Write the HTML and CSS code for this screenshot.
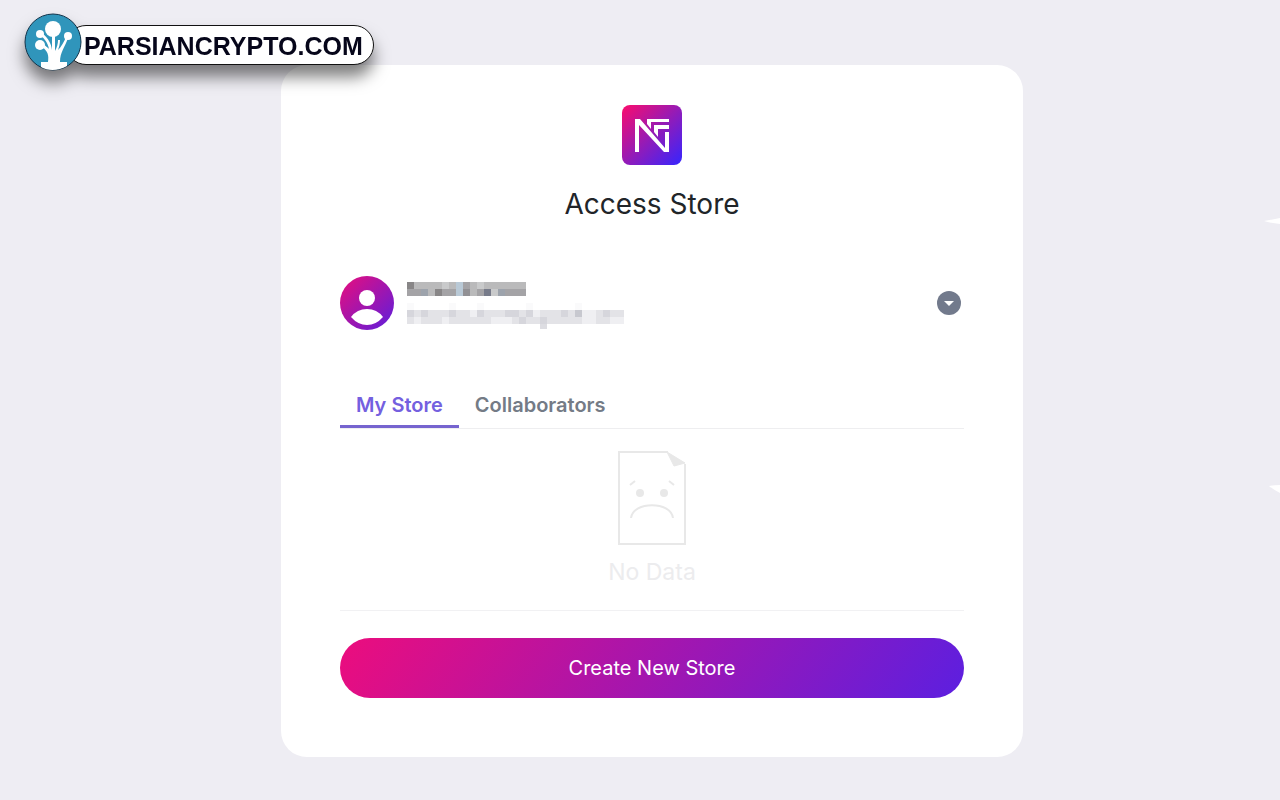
FILE: index.html
```html
<!DOCTYPE html>
<html lang="en">

<head>
    <meta charset="UTF-8">
    <meta name="viewport" content="width=device-width, initial-scale=1.0">
    <title>Access Store</title>
    <link rel="stylesheet" href="styles.css">
</head>

<body>
    <!-- site badge, floats over the page -->
    <a class="brand" href="#">
        <svg class="brand-icon" viewBox="0 0 58 58" aria-hidden="true">
            <circle cx="29" cy="29" r="28" fill="#3095bb" stroke="#12334a" stroke-width="1" />
            <g fill="#fff">
                <circle cx="29" cy="16" r="8" />
                <circle cx="16" cy="21" r="4" />
                <circle cx="16" cy="32" r="5" />
                <circle cx="44" cy="23" r="4" />
                <path d="M17 49H24C25 42 24 38 17 33L19 31C22 33 24 35 25 36C24 30 20 25 17 23L19 21C24 25 27 30 28 37L28 22H31L31 38C33 34 34 31 34 27H36C36 31 35 34 34 37C37 34 40 29 42 24L44 25C41 34 36 39 36 49H43V53C34 58 24 58 17 54Z" />
            </g>
        </svg>
        <span class="brand-name">PARSIANCRYPTO.COM</span>
    </a>

    <!-- tips of the background shape at the right edge -->
    <svg class="spark spark-top" viewBox="0 0 16 6" aria-hidden="true">
        <path d="M0 3L16 0V6Q6 5 0 3Z" fill="#fff" />
    </svg>
    <svg class="spark spark-bottom" viewBox="0 0 11 9" aria-hidden="true">
        <path d="M0 2Q5 1 11 1V9Q5 6 0 2Z" fill="#fff" />
    </svg>

    <main class="card">
        <svg class="logo" viewBox="0 0 60 60" role="img" aria-label="NF">
            <defs>
                <linearGradient id="logoFill" x1="0" y1="0" x2="1" y2="1">
                    <stop offset="0" stop-color="#fc0c6c" />
                    <stop offset="0.5" stop-color="#951bb6" />
                    <stop offset="1" stop-color="#3525ff" />
                </linearGradient>
            </defs>
            <rect width="60" height="60" rx="8" fill="url(#logoFill)" />
            <g fill="#fff">
                <path d="M13 47V14H18L43 43V27H47V47H42L17 20V47Z" />
                <path d="M25 14H47V17H29V24L25 19Z" />
                <path d="M32 20H47V24H36V32L32 27Z" />
            </g>
        </svg>
        <h1 class="title">Access Store</h1>

        <section class="account">
            <svg class="avatar" viewBox="0 0 54 54" aria-hidden="true">
                <defs>
                    <linearGradient id="avatarFill" x1="0.1" y1="0.1" x2="0.9" y2="0.9">
                        <stop offset="0" stop-color="#dc0f85" />
                        <stop offset="1" stop-color="#6a1cd4" />
                    </linearGradient>
                </defs>
                <circle cx="27" cy="27" r="27" fill="url(#avatarFill)" />
                <circle cx="27" cy="22" r="8" fill="#fff" />
                <path d="M11 41Q17 33 27 33T43 41Q36 49 27 49T11 41Z" fill="#fff" />
            </svg>
            <!-- masked name and address, 7px blocks -->
            <svg class="masked" viewBox="0 0 217 54" shape-rendering="crispEdges" aria-hidden="true">
                <path fill="#bababb" d="M0 6h119v14H0z" />
                <path fill="#888687" d="M0 6h7v7H0zM28 13h7v7h-7z" />
                <path fill="#a4a3a6" d="M0 13h14v7H0zM35 13h14v7H35zM56 6h7v7h-7zM70 13h7v7h-7zM98 13h21v7H98z" />
                <path fill="#9da3ac" d="M14 13h7v7h-7zM91 13h7v7h-7z" />
                <path fill="#919094" d="M56 13h7v7h-7z" />
                <path fill="#777b8a" d="M77 13h7v7h-7z" />
                <path fill="#c9cacb" d="M35 6h7v7h-7zM70 6h7v7h-7zM84 13h7v7h-7z" />
                <path fill="#b9c9d6" d="M49 6h7v14h-7z" />
                <path fill="#fafafb" d="M0 27h7v7H0zM42 27h7v7h-7zM70 27h7v7h-7zM119 27h7v7h-7zM168 27h7v7h-7z" />
                <path fill="#e3e3e7" d="M0 34h217v14H0z" />
                <path fill="#d6d6dc" d="M0 34h7v7H0zM14 34h7v7h-7zM42 34h7v7h-7zM70 34h7v7h-7zM98 34h14v7H98zM119 34h7v7h-7zM154 34h7v7h-7zM196 34h7v7h-7zM112 41h7v7h-7zM133 41h7v7h-7z" />
                <path fill="#c7c8cf" d="M168 34h7v7h-7z" />
                <path fill="#efeff2" d="M7 41h7v7H7zM35 41h7v7h-7zM63 34h7v7h-7zM84 41h21v7H84zM126 34h7v7h-7zM175 34h14v14h-14zM203 41h14v7h-14z" />
                <path fill="#dddde2" d="M133 48h7v5h-7z" />
            </svg>
            <button class="toggle" type="button" aria-label="Switch account">
                <svg viewBox="0 0 24 24" aria-hidden="true">
                    <path d="M7 10H17L12 15Z" fill="#fff" />
                </svg>
            </button>
        </section>

        <nav class="tabs">
            <a class="tab tab-active" href="#">My Store</a>
            <a class="tab" href="#">Collaborators</a>
        </nav>

        <section class="empty">
            <svg class="empty-icon" viewBox="0 0 70 94" fill="none" stroke="#e8e8e8" stroke-width="2" aria-hidden="true">
                <path d="M51 1H2V93H68V13" />
                <path d="M50 1L68 12L57 15Z" fill="#e8e8e8" stroke-width="1" />
                <circle cx="23" cy="42" r="4" fill="#e8e8e8" stroke="none" />
                <circle cx="47" cy="42" r="4" fill="#e8e8e8" stroke="none" />
                <path d="M13 34L18 30M52 30L57 34" />
                <path d="M14 67C16 50 54 50 56 67" />
            </svg>
            <p class="empty-text">No Data</p>
        </section>

        <button class="create" type="button">Create New Store</button>
    </main>
</body>

</html>
```

FILE: styles.css
```css
* {
    box-sizing: border-box;
    margin: 0;
    padding: 0;
}

body {
    min-height: 100vh;
    padding: 65px 0 43px 24px;
    background-color: #eeedf3;
    font-family: Inter, "Open Sans", sans-serif;
    color: #212529;
    position: relative;
    overflow-x: hidden;
}

/* site badge */
.brand {
    position: absolute;
    top: 13px;
    left: 24px;
    display: flex;
    align-items: flex-end;
    text-decoration: none;
    filter: drop-shadow(0 12px 8px rgba(0, 0, 0, 0.5));
}

.brand-icon {
    width: 58px;
    height: 58px;
    position: relative;
    z-index: 1;
}

.brand-name {
    height: 40px;
    margin: 0 0 6px -16px;
    padding: 0 10px 0 17px;
    border: 1px solid #111;
    border-radius: 20px;
    background-color: #fff;
    color: #06061a;
    font: bold 25px/40px "Liberation Sans", Arial, sans-serif;
}

/* background tips */
.spark {
    position: absolute;
    right: 0;
}

.spark-top {
    top: 218px;
    width: 16px;
}

.spark-bottom {
    top: 484px;
    width: 11px;
}

.card {
    max-width: 742px;
    margin: 0 auto;
    padding: 40px 59px 59px;
    border-radius: 26px;
    background-color: #fff;
}

.logo {
    display: block;
    width: 60px;
    margin: 0 auto 18px;
}

.title {
    font-size: 28px;
    font-weight: 400;
    line-height: 42px;
    text-align: center;
}

/* account row */
.account {
    display: flex;
    align-items: center;
    margin: 51px 0 49px;
    padding-right: 3px;
}

.avatar {
    width: 54px;
    margin-right: 13px;
}

.masked {
    width: 217px;
    height: 54px;
}

.toggle {
    width: 24px;
    height: 24px;
    margin-left: auto;
    border: none;
    border-radius: 50%;
    background-color: #727a8c;
    cursor: pointer;
}

.toggle svg {
    display: block;
}

/* tabs */
.tabs {
    display: flex;
    border-bottom: 1px solid #eeeef0;
}

.tab {
    padding: 6px 16px 0;
    border-bottom: 3px solid transparent;
    color: #747b86;
    font-size: 20px;
    font-weight: 600;
    line-height: 40px;
    text-decoration: none;
}

.tab-active {
    border-bottom-color: #7664cf;
    color: #7460df;
}

/* empty list */
.empty {
    padding: 22px 0 19px;
    border-bottom: 1px solid #f1f1f3;
    text-align: center;
}

.empty-icon {
    display: block;
    width: 70px;
    margin: 0 auto 8px;
}

.empty-text {
    color: #ececee;
    font-size: 23px;
    line-height: 38px;
}

.create {
    display: block;
    width: 100%;
    height: 60px;
    margin-top: 27px;
    border: none;
    border-radius: 30px;
    background: linear-gradient(125deg, #ec0d7d, #5c1fe0);
    color: #fff;
    font: 400 20px/30px Inter, "Open Sans", sans-serif;
    cursor: pointer;
}
```
